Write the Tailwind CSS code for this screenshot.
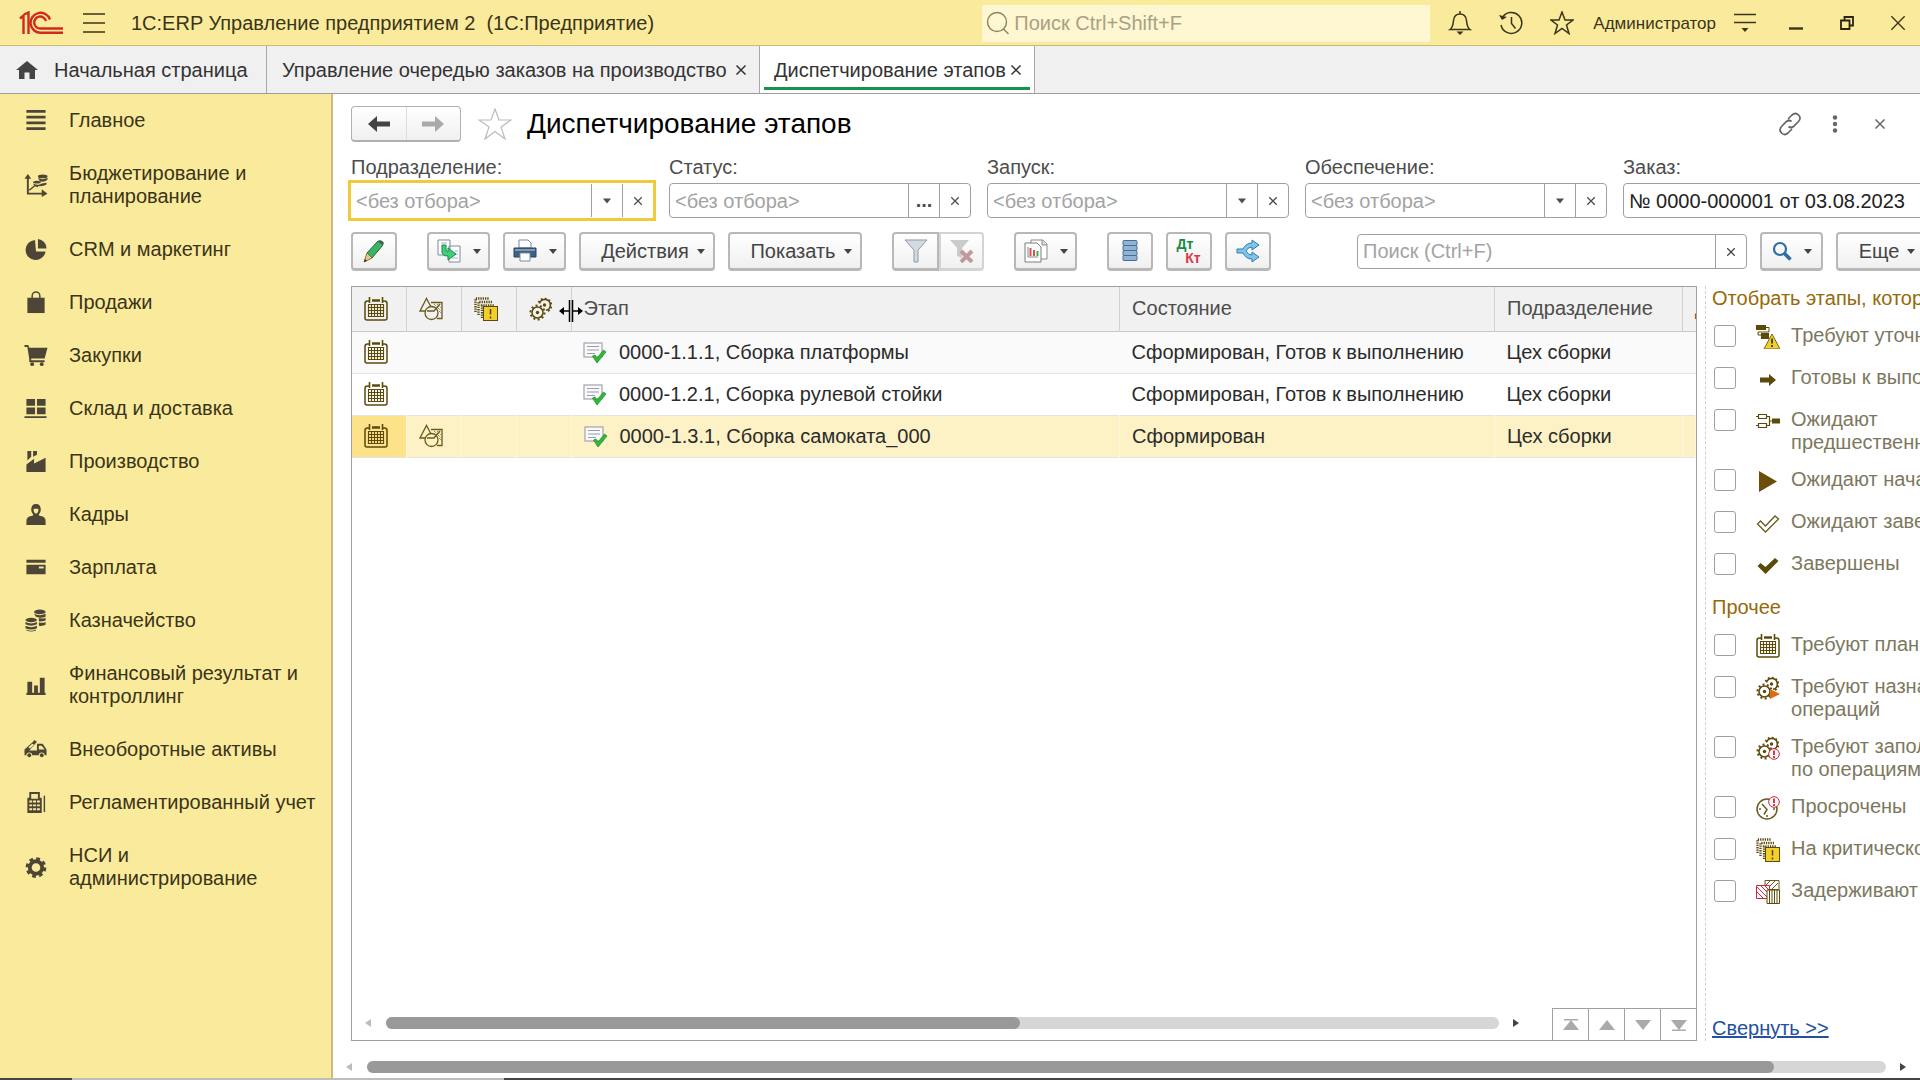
<!DOCTYPE html>
<html lang="ru">
<head>
    <meta charset="UTF-8">
    <meta name="viewport" content="width=device-width, initial-scale=1.0">
    <title>Диспетчирование этапов</title>
    <script src="https://cdn.jsdelivr.net/npm/@tailwindcss/browser@4"></script>
</head>
<body class="h-screen flex flex-col overflow-hidden bg-white font-['Liberation_Sans',Arial,sans-serif] text-[20px] leading-[23px] text-[#333]">

    <!-- Shared icons -->
    <svg class="hidden">
        <symbol id="calendar" viewBox="0 0 24 24">
            <path d="M5 4H3.500Q1 4 1 6.500V21q0 2 2 2h18q2 0 2-2V6.500Q23 4 20.500 4H19" fill="none" stroke="#5c4a0a" stroke-width="1.500"/>
            <path d="M8 3.500h8" stroke="#5c4a0a" stroke-width="2.500"/>
            <path d="M5.500 0v6M18.500 0v6" stroke="#5c4a0a" stroke-width="1.600"/>
            <path d="M4 7.500h16M4 10.500h16M4 13.500h16M4 16.500h16M4 19.500h16M4.500 7v13M7.500 7v13M10.500 7v13M13.500 7v13M16.500 7v13M19.500 7v13" stroke="#5c4a0a" stroke-width="1.100"/>
        </symbol>
        <symbol id="shapes" viewBox="0 0 24 24">
            <g fill="none" stroke="#6b5a1e" stroke-width="1.300">
                <path d="M12 10L7.500 1.500 1 14h6"/>
                <circle cx="12.500" cy="16" r="6.500"/>
                <path d="M12 5.500h11v16h-5M8 14h7L21 7"/>
                <path d="M15 7l7 7M18 7l4 4M20 14l3 3" stroke-width="1" stroke-dasharray="1 1"/>
            </g>
        </symbol>
        <symbol id="critical" viewBox="0 0 24 24">
            <path d="M1.500 15V1.500H15M4.500 18V5H18M8 21V8.500h12" fill="none" stroke="#5c4a0a" stroke-width="2.400" stroke-dasharray="1.300 1"/>
            <rect x="9.500" y="9.500" width="14" height="14" fill="#f3cf2c" stroke="#5c4a0a"/>
            <path d="M16.500 12v5.500M16.500 19.500v2" stroke="#5c4a0a" stroke-width="1.600"/>
        </symbol>
        <symbol id="gears" viewBox="0 0 24 24">
            <g fill="none" stroke="#5c4a0a">
                <path d="M10.500 6.500A5.500 5.500 0 1 1 17 13.300" stroke-width="1.500"/>
                <path d="M9.500 5.500A6.700 6.700 0 1 1 17.500 14.800" stroke-width="2" stroke-dasharray="1.800 2"/>
                <circle cx="8.500" cy="15.500" r="5.500" stroke-width="1.500"/>
                <circle cx="8.500" cy="15.500" r="7" stroke-width="2" stroke-dasharray="2 2.400"/>
            </g>
            <circle cx="8.500" cy="15.500" r="1.700" fill="#5c4a0a"/>
            <circle cx="15.500" cy="8" r="1.700" fill="#5c4a0a"/>
        </symbol>
        <symbol id="stage" viewBox="0 0 24 24">
            <rect x="1" y="3" width="18" height="14" fill="#fafafa" stroke="#a2a2aa" stroke-width="1.200"/>
            <path d="M4 6.500h12M4 10h12M4 13.500h8" stroke="#9a9ab0" stroke-width="1.200"/>
            <path d="M9.500 16l4.500 7 9-11-2.500-2-6.500 8-2-3z" fill="#2fb83c" stroke="#158a22" stroke-width=".7"/>
        </symbol>
        <symbol id="cross" viewBox="0 0 12 12">
            <path d="M1.500 1.500l9 9M10.500 1.500l-9 9" fill="none" stroke="currentColor" stroke-width="1.500"/>
        </symbol>
        <symbol id="down" viewBox="0 0 10 6">
            <path d="M0 0h10L5 6z" fill="currentColor"/>
        </symbol>
    </svg>

    <!-- Title bar -->
    <header class="h-[46px] shrink-0 flex items-center bg-[#faeb9c] border-b border-[#c9bb73] pl-[19px] pr-[14px] pt-px text-[#3a3419]">
        <svg class="w-11 h-6 shrink-0" viewBox="0 0 44 24" fill="none" stroke="#cf2a1c" stroke-width="2.400">
            <path d="M1 7.500L4.500 4.500V23M5 3.500l4.500-2V23"/>
            <path d="M31 8.500A10 10 0 1 0 22 21.800h22"/>
            <path d="M27 10a6 6 0 1 0-5 7.500h22"/>
        </svg>
        <button class="ml-5 shrink-0" aria-label="Меню">
            <svg class="w-[22px] h-5" viewBox="0 0 22 20" stroke="#3a3419" stroke-width="1.600"><path d="M0 1h22M0 10h22M0 19h22"/></svg>
        </button>
        <h1 class="ml-[26px] whitespace-pre">1С:ERP Управление предприятием 2  (1С:Предприятие)</h1>
        <label class="ml-auto w-[448px] h-[37px] flex items-center bg-[#fff6d2] pl-1 gap-1">
            <svg class="w-6 h-6 shrink-0" viewBox="0 0 24 24" fill="none" stroke="#8a8460" stroke-width="1.400"><circle cx="11" cy="11" r="9.500"/><path d="M17.500 18l5 5"/></svg>
            <input type="search" placeholder="Поиск Ctrl+Shift+F" class="grow min-w-0 outline-none placeholder:text-[#a9a184]">
        </label>
        <button class="ml-[18px]" aria-label="Уведомления">
            <svg class="w-6 h-6" viewBox="0 0 24 24" fill="none" stroke="#3a3419" stroke-width="1.500"><path d="M2 18.500c3-2 3-5 3.500-9C6 5 8.500 3 12 3s6 2 6.500 6.500c.5 4 .5 7 3.500 9zM12 0v3"/><path d="M8.500 20.500h7L12 24z" fill="#3a3419" stroke="none"/></svg>
        </button>
        <button class="ml-[27px]" aria-label="История">
            <svg class="w-6 h-6" viewBox="0 0 24 24" fill="none" stroke="#3a3419" stroke-width="1.500"><path d="M3 7a10.500 10.500 0 1 1-1 7M12.500 6v6.500l4 5"/><path d="M0 4l3 5 5-3z" fill="#3a3419" stroke="none"/></svg>
        </button>
        <button class="ml-[27px]" aria-label="Избранное">
            <svg class="w-6 h-6" viewBox="0 0 24 24" fill="none" stroke="#3a3419" stroke-width="1.500"><path d="M12 1l3 8h8l-6.500 5 2.500 8.500-7-5-7 5L7.500 14 1 9h8z"/></svg>
        </button>
        <a href="#" class="ml-[19px] text-[17px]">Администратор</a>
        <button class="ml-[18px]" aria-label="Сервис">
            <svg class="w-[22px] h-5" viewBox="0 0 22 20" stroke="#3a3419" stroke-width="1.600"><path d="M0 1.500h22M0 9.500h22"/><path d="M7.500 15h7l-3.500 4z" fill="#3a3419" stroke="none"/></svg>
        </button>
        <button class="ml-[33px]" aria-label="Свернуть">
            <svg class="w-[14px] h-[14px]" viewBox="0 0 14 14" stroke="#3a3419" stroke-width="2.400"><path d="M0 12.500h14"/></svg>
        </button>
        <button class="ml-[37px]" aria-label="Развернуть">
            <svg class="w-[14px] h-[14px]" viewBox="0 0 14 14" fill="none" stroke="#2a2510" stroke-width="1.800"><path d="M1 4.500h8.500V13H1z"/><path d="M4.500 4.500V1H13v8.500H9.500"/></svg>
        </button>
        <button class="ml-9" aria-label="Закрыть">
            <svg class="w-4 h-4" viewBox="0 0 12 12" stroke="#3a3419"><path d="M1 1l10 10M11 1L1 11"/></svg>
        </button>
    </header>

    <!-- Open windows -->
    <nav class="h-12 shrink-0 flex bg-[#f0f0f0] border-b border-[#9c9c9c] [&>a]:pt-px">
        <a href="#" class="flex items-center gap-4 pl-4 w-[267px] border-r border-[#a8a8a8]">
            <svg class="w-[22px] h-[18px]" viewBox="0 0 22 18" fill="#444"><path d="M11 0L0 9h3v9h5.500v-6.500h5V18H19V9h3z"/></svg>
            Начальная страница
        </a>
        <a href="#" class="flex items-center justify-between pl-[15px] pr-3 w-[492px]">
            Управление очередью заказов на производство
            <svg class="w-3 h-3"><use href="#cross"/></svg>
        </a>
        <a href="#" class="relative flex items-center justify-between pl-[14px] pr-3 w-[276px] bg-white border-x border-[#a8a8a8]">
            Диспетчирование этапов
            <svg class="w-3 h-3"><use href="#cross"/></svg>
            <span class="absolute inset-x-1 bottom-[3px] h-[3px] bg-[#169150]"></span>
        </a>
    </nav>

    <div class="grow min-h-0 flex">

        <!-- Sections -->
        <aside class="w-[333px] shrink-0 bg-[#faeb9c] border-r-2 border-[#cdbb7f] text-[#3a3419]">
            <ul class="[&_a]:flex [&_a]:items-center [&_a]:gap-[21px] [&_a]:pl-6 [&_a]:py-[15px] [&_svg]:w-6 [&_svg]:h-[23px] [&_svg]:shrink-0 [&_svg]:text-[#4d4637] [&_svg]:fill-current">
                <li><a href="#"><svg viewBox="0 0 24 24"><path d="M2 1h20v3H2zM2 7h20v3H2zM2 13h20v3H2zM2 19h20v3H2z"/></svg>Главное</a></li>
                <li><a href="#"><svg viewBox="0 0 24 24"><path d="M0 5l3.500-5L7 5H4.500v14.500H18V16l6 4.500-6 3.500v-2.500H2.500V5z"/><path d="M5 17l6-5 3 1" fill="none" stroke="currentColor" stroke-width="1.500"/><ellipse cx="19" cy="2.500" rx="5" ry="2"/><path d="M14 4q5 3 10 0v2q-4 3-8 1.500zM9 8q4-2 8 0v1q-4 2-8 0zM9 10q5 2.500 9 0l5-1v2q-5 3-13 1z"/></svg>Бюджетирование и<br>планирование</a></li>
                <li><a href="#"><svg viewBox="0 0 24 24"><path d="M11 2a10.500 10.500 0 1 0 11 12H12z"/><path d="M14 1v10h9A10 10 0 0 0 14 1z"/></svg>CRM и маркетинг</a></li>
                <li><a href="#"><svg viewBox="0 0 24 24"><path d="M3 7h18v16H3z"/><path d="M8 11V5a4 4 0 0 1 8 0v6" fill="none" stroke="currentColor" stroke-width="1.500"/></svg>Продажи</a></li>
                <li><a href="#"><svg viewBox="0 0 24 24"><path d="M0 1h4l1 3h19l-3 11H7v2h14v2H5v-3L3 3H0z"/><circle cx="8" cy="21" r="2"/><circle cx="18" cy="21" r="2"/></svg>Закупки</a></li>
                <li><a href="#"><svg viewBox="0 0 24 24"><path d="M2 2h9v7H2zM13 2h9v7h-9zM2 11h9v7H2zM13 11h9v7h-9zM0 20h23v2H0z"/></svg>Склад и доставка</a></li>
                <li><a href="#"><svg viewBox="0 0 24 24"><path d="M2 23v-8l8-6v5l12-6v15zM3 1h4v6l-4 4zM9 1h4v4L9 7z"/></svg>Производство</a></li>
                <li><a href="#"><svg viewBox="0 0 24 24"><path d="M12 1q5 0 5 6 0 3-2 5v1l4 1q3 1 3 5v4H2v-4q0-4 3-5l4-1v-1Q7 10 7 7q0-6 5-6z"/><path d="M9.500 6h5q0 5-2.500 5T9.500 6z" fill="#faeb9c"/></svg>Кадры</a></li>
                <li><a href="#"><svg viewBox="0 0 24 24"><path d="M2 4h20v3H2zM2 9h20v10H2z"/><path d="M15 11h5v2h-5z" fill="#faeb9c"/></svg>Зарплата</a></li>
                <li><a href="#"><svg viewBox="0 0 24 24"><ellipse cx="16" cy="3" rx="6" ry="2.500"/><path d="M10 5q6 3 12 0v3q-5 2-10 0zM15 9.500q4 1 7-.5v3q-3 1-7 1zM15 14q4 1 7-.5v3q-3 1.500-7 1z"/><ellipse cx="7" cy="11.500" rx="6" ry="2.300"/><path d="M1 13.500q6 3 12 0v2.500q-6 3-12 0zM1 17.500q6 3 12 0V20q-6 3-12 0zM2 21.500q5 2.500 10 0v1q-5 2-10 0z"/></svg>Казначейство</a></li>
                <li><a href="#"><svg viewBox="0 0 24 24"><path d="M2 19.500h20V22H2zM3 8h5v12H3zM10 12h4v8h-4zM16 4h5v16h-5z"/></svg>Финансовый результат и<br>контроллинг</a></li>
                <li><a href="#"><svg viewBox="0 0 24 24"><path d="M0 12l9-8 1-2 3 2-8 9h8V6h6l4 6v6h-2a3 3 0 0 0-6 0H8a3 3 0 0 0-6 0H0z"/><path d="M15 8h3l3 4h-6zM4 10l4-4 2 1-4 4z" fill="#faeb9c"/><circle cx="5" cy="18" r="2"/><circle cx="18" cy="18" r="2"/></svg>Внеоборотные активы</a></li>
                <li><a href="#"><svg viewBox="0 0 24 24"><path d="M5 1h11v6h2v16H3V7h2zM20 5h1.500v17H20z"/><path d="M7 3h7v5H7zM5 10h3v2H5zM9 10h3v2H9zM13 10h3v2h-3zM5 14h3v2H5zM9 14h3v2H9zM13 14h3v2h-3zM5 18h3v2H5zM9 18h3v2H9zM13 18h3v2h-3z" fill="#faeb9c"/></svg>Регламентированный учет</a></li>
                <li><a href="#"><svg viewBox="0 0 24 24"><circle cx="12" cy="12" r="6.500" fill="none" stroke="currentColor" stroke-width="4"/><circle cx="12" cy="12" r="9.300" fill="none" stroke="currentColor" stroke-width="3" stroke-dasharray="3.900 3.400"/></svg>НСИ и<br>администрирование</a></li>
            </ul>
        </aside>

        
        <main class="grow min-w-0 overflow-hidden flex flex-col">
            <div class="flex items-center pl-[18px] pt-3 pr-[34px] h-12 shrink-0 text-[#666]">
                <div class="flex w-[110px] h-9 rounded border border-[#b0b0b0] border-b-2 bg-linear-to-b from-white to-[#f0f0f0]">
                    <button class="flex-1 flex items-center justify-center border-r border-[#ddd]" aria-label="Назад"><svg class="w-[22px] h-4" viewBox="0 0 22 16" fill="#444"><path d="M0 8l9-8v5.500h13v5H9V16z"/></svg></button>
                    <button class="flex-1 flex items-center justify-center" aria-label="Вперед"><svg class="w-[22px] h-4" viewBox="0 0 22 16" fill="#aaa"><path d="M22 8l-9-8v5.500H0v5h13V16z"/></svg></button>
                </div>
                <button class="ml-[17px]" aria-label="В избранное"><svg class="w-[34px] h-8" viewBox="0 0 34 32" fill="none" stroke="#bbb" stroke-width="1.200"><path d="M17 1l4 11h12l-10 7 4 12-10-7.500L7 31l4-12L1 12h12z"/></svg></button>
                <h2 class="ml-[15px] text-[28px] leading-8 text-black whitespace-nowrap">Диспетчирование этапов</h2>
                <button class="ml-auto" aria-label="Ссылка"><svg class="w-6 h-6" viewBox="0 0 24 24" fill="none" stroke="currentColor" stroke-width="1.700"><path d="M10 7l4-4q3.500-3 6.500 0t0 6.500l-5 5q-2.500 2-5 0M14 17l-4 4q-3.500 3-6.500 0t0-6.500l5-5q2.500-2 5 0"/></svg></button>
                <button class="ml-[30px]" aria-label="Действия формы"><svg class="w-[6px] h-[18px]" viewBox="0 0 6 18" fill="currentColor"><circle cx="3" cy="2.500" r="2.200"/><circle cx="3" cy="9" r="2.200"/><circle cx="3" cy="15.500" r="2.200"/></svg></button>
                <button class="ml-9" aria-label="Закрыть форму"><svg class="w-3 h-3"><use href="#cross"/></svg></button>
            </div>

            <div class="grow min-h-0 w-[calc(100%+124px)] pl-[18px] pt-[13px] flex flex-col">

                <!-- Filters -->
                <div class="flex gap-4 shrink-0 text-[#4d4d4d] [&>div]:w-[302px] [&>div]:shrink-0 [&_label]:block [&_label]:leading-6 [&_label]:mb-1 [&_input]:grow [&_input]:min-w-0 [&_input]:px-[5px] [&_input]:pt-px [&_input]:outline-none [&_input]:placeholder:text-[#a3a3a3] [&_button]:w-[31px] [&_button]:shrink-0 [&_button]:border-l [&_button]:border-[#a0a0a0] [&_button]:flex [&_button]:items-center [&_button]:justify-center">
                    <div>
                        <label for="department">Подразделение:</label>
                        <div class="flex h-[35px] py-px outline-3 outline-[#efcb3c]">
                            <input id="department" placeholder="&lt;без отбора&gt;">
                            <button aria-label="Выбрать"><svg class="w-2 h-[6px]"><use href="#down"/></svg></button>
                            <button aria-label="Очистить"><svg class="w-[10px] h-[10px]"><use href="#cross"/></svg></button>
                        </div>
                    </div>
                    <div>
                        <label for="status">Статус:</label>
                        <div class="flex h-[35px] rounded border border-[#a0a0a0]">
                            <input id="status" placeholder="&lt;без отбора&gt;">
                            <button class="font-bold">...</button>
                            <button aria-label="Очистить"><svg class="w-[10px] h-[10px]"><use href="#cross"/></svg></button>
                        </div>
                    </div>
                    <div>
                        <label for="launch">Запуск:</label>
                        <div class="flex h-[35px] rounded border border-[#a0a0a0]">
                            <input id="launch" placeholder="&lt;без отбора&gt;">
                            <button aria-label="Выбрать"><svg class="w-2 h-[6px]"><use href="#down"/></svg></button>
                            <button aria-label="Очистить"><svg class="w-[10px] h-[10px]"><use href="#cross"/></svg></button>
                        </div>
                    </div>
                    <div>
                        <label for="supply">Обеспечение:</label>
                        <div class="flex h-[35px] rounded border border-[#a0a0a0]">
                            <input id="supply" placeholder="&lt;без отбора&gt;">
                            <button aria-label="Выбрать"><svg class="w-2 h-[6px]"><use href="#down"/></svg></button>
                            <button aria-label="Очистить"><svg class="w-[10px] h-[10px]"><use href="#cross"/></svg></button>
                        </div>
                    </div>
                    <div>
                        <label for="order">Заказ:</label>
                        <div class="flex h-[35px] rounded border border-[#a0a0a0]">
                            <input id="order" value="№ 0000-000001 от 03.08.2023" class="text-[#222]">
                        </div>
                    </div>
                </div>

                <!-- Command bar -->
                <div class="mt-[14px] flex shrink-0 items-center text-[#444] [&_button]:h-[39px] [&_button]:shrink-0 [&_button]:flex [&_button]:items-center [&_button]:justify-center [&>button]:rounded [&>button]:border-2 [&>button]:border-[#b8b8b8] [&>button]:border-b-3 [&>button]:bg-linear-to-b [&>button]:from-white [&>button]:to-[#f0f0f0]">
                    <button class="w-[46px]" aria-label="Изменить"><svg class="w-6 h-6" viewBox="0 0 24 24"><path d="M5 14L16 2l5 4-11 13z" fill="#3cb465" stroke="#23663b"/><path d="M16 2l2-1q3 1 4 3l-1 2z" fill="#3f5f4a"/><path d="M5 14l-3 9 8-4z" fill="#e8c98a" stroke="#8a6f35"/><path d="M2 23l1-3 2 2z" fill="#333"/></svg></button>
                    <button class="ml-[30px] w-[63px] gap-3" aria-label="Создать на основании"><svg class="w-6 h-6" viewBox="0 0 24 24"><path d="M1 1h12v15H1zM12 7h11v16H12z" fill="#fff" stroke="#7d8d97"/><path d="M4 4h6M4 7h4M15 19h6M18 12h3M18 15h3" stroke="#9fb3bf"/><path d="M5 6v7q0 4 6 4v4l8-6-8-6v4q-2 0-2-3V6z" fill="#3fd07c" stroke="#1d8a48"/></svg><svg class="w-2 h-[5px]"><use href="#down"/></svg></button>
                    <button class="ml-[13px] w-[63px] gap-3" aria-label="Печать"><svg class="w-6 h-6" viewBox="0 0 24 24"><path d="M6 9V1h9l3 3v5z" fill="#fff" stroke="#7d8d97"/><path d="M1 9h22v9H1z" fill="#3d6183" stroke="#294763"/><path d="M2 10h20v2H2z" fill="#7e9db8"/><path d="M7 14h10v8H7z" fill="#fff" stroke="#7d8d97"/></svg><svg class="w-2 h-[5px]"><use href="#down"/></svg></button>
                    <button class="ml-[13px] w-[136px] gap-2 pl-3">Действия<svg class="w-2 h-[5px]"><use href="#down"/></svg></button>
                    <button class="ml-[13px] w-[134px] gap-2 pl-3">Показать<svg class="w-2 h-[5px]"><use href="#down"/></svg></button>
                    <div class="ml-[30px] flex shrink-0 [&_button]:border-2 [&_button]:border-b-3 [&_button]:bg-linear-to-b [&_button]:from-white [&_button]:to-[#f0f0f0]">
                        <button class="w-[47px] rounded-l border-[#b8b8b8]" aria-label="Отбор"><svg class="w-6 h-6" viewBox="0 0 24 24"><path d="M1 1h22l-9 10v12h-4V11z" fill="#d4dae0" stroke="#8d9aa5"/></svg></button>
                        <button class="w-[45px] rounded-r border-[#d4d4d4] border-l-0" aria-label="Снять отбор"><svg class="w-6 h-6" viewBox="0 0 24 24"><path d="M0 1h19l-7 8v10l-5-2V9z" fill="#cbcbcb"/><path d="M11 12l11 11M22 12L11 23" stroke="#c09a9a" stroke-width="4"/></svg></button>
                    </div>
                    <button class="ml-[30px] w-[63px] gap-3" aria-label="Отчеты"><svg class="w-6 h-6" viewBox="0 0 24 24"><path d="M7 1h12l4 4v15H7z" fill="#fff" stroke="#8c8c8c"/><path d="M18 1v5h5" fill="#d9d9d9" stroke="#8c8c8c"/><path d="M1 4h12l4 4v15H1z" fill="#fff" stroke="#7c7c7c"/><path d="M4 8v10h10" fill="none" stroke="#888"/><path d="M6.500 9v8M10 11v6" stroke="#d95050" stroke-width="2"/><path d="M13.500 12v5" stroke="#3ab15b" stroke-width="2"/></svg><svg class="w-2 h-[5px]"><use href="#down"/></svg></button>
                    <button class="ml-[30px] w-[46px]" aria-label="Список"><svg class="w-6 h-6" viewBox="0 0 24 24"><g fill="#8fb4d6" stroke="#4b6d90"><rect x="5" y="1.500" width="14" height="5" rx="1"/><rect x="5" y="6.500" width="14" height="5" rx="1"/><rect x="5" y="11.500" width="14" height="5" rx="1"/><rect x="5" y="16.500" width="14" height="5" rx="1"/></g></svg></button>
                    <button class="ml-[13px] w-[46px] text-[14px] leading-[14px] font-bold"><span><span class="block pr-2 text-[#168a45]">Дт</span><span class="block pl-2 text-[#d93a44]">Кт</span></span></button>
                    <button class="ml-[13px] w-[46px]" aria-label="Структура"><svg class="w-6 h-6" viewBox="0 0 24 24"><path d="M1 10h6q3-6 9-6V1l7 5-7 5V8q-4 0-6 4 2 4 6 4v-3l7 5-7 5v-3q-6 0-9-6H1z" fill="#7fc4ea" stroke="#2e7fae"/></svg></button>
                    <div class="ml-[86px] grow flex h-[35px] rounded border border-[#a0a0a0]">
                        <input type="text" aria-label="Поиск" placeholder="Поиск (Ctrl+F)" class="grow min-w-0 px-[5px] outline-none placeholder:text-[#a3a3a3]">
                        <button class="w-[31px] h-full! border-l border-[#a0a0a0]" aria-label="Очистить"><svg class="w-[10px] h-[10px]"><use href="#cross"/></svg></button>
                    </div>
                    <button class="ml-[13px] w-[63px] gap-3" aria-label="Найти"><svg class="w-5 h-5" viewBox="0 0 20 20" fill="none" stroke="#2e6da4"><circle cx="8" cy="8" r="6" stroke-width="2.200"/><path d="M12.500 12.500l6 6" stroke-width="3.500"/></svg><svg class="w-2 h-[5px]"><use href="#down"/></svg></button>
                    <button class="ml-[13px] mr-[114px] w-[94px] gap-2 pl-2">Еще<svg class="w-2 h-[5px]"><use href="#down"/></svg></button>
                </div>

                <div class="mt-[15px] grow min-h-0 flex">

                    <!-- Stages -->
                    <section class="relative grow min-w-0 flex flex-col border border-[#a0a0a0]">
                        <table class="w-full table-fixed text-left text-[#2b2b2b] [&_th]:font-normal [&_th]:text-[#4d4d4d] [&_th]:h-11 [&_th]:border-r [&_th]:border-[#d0d0d0] [&_td]:h-[42px] [&_th]:px-3 [&_td]:px-3 [&_th]:overflow-hidden [&_tr]:border-b [&_tr]:border-[#e4e4e4] whitespace-nowrap">
                            <colgroup>
                                <col class="w-[54px]"><col class="w-[55px]"><col class="w-[55px]"><col class="w-[55px]">
                                <col><col class="w-[375px]"><col class="w-[188px]"><col class="w-[13px]">
                            </colgroup>
                            <thead>
                                <tr class="bg-[#f1f1f1] border-[#c8c8c8]!">
                                    <th aria-label="Планирование"><svg class="w-6 h-6"><use href="#calendar"/></svg></th>
                                    <th aria-label="Обеспечение"><svg class="w-6 h-6"><use href="#shapes"/></svg></th>
                                    <th aria-label="Критический путь"><svg class="w-6 h-6"><use href="#critical"/></svg></th>
                                    <th aria-label="Операции"><svg class="w-6 h-6"><use href="#gears"/></svg></th>
                                    <th>Этап</th>
                                    <th>Состояние</th>
                                    <th>Подразделение</th>
                                    <th class="border-r-0!">Д</th>
                                </tr>
                            </thead>
                            <tbody>
                                <tr class="bg-[#fafafa]">
                                    <td><svg class="w-6 h-6"><use href="#calendar"/></svg></td><td></td><td></td><td></td>
                                    <td><div class="flex items-center gap-3"><svg class="w-6 h-6"><use href="#stage"/></svg>0000-1.1.1, Сборка платформы</div></td>
                                    <td>Сформирован, Готов к выполнению</td><td>Цех сборки</td><td></td>
                                </tr>
                                <tr>
                                    <td><svg class="w-6 h-6"><use href="#calendar"/></svg></td><td></td><td></td><td></td>
                                    <td><div class="flex items-center gap-3"><svg class="w-6 h-6"><use href="#stage"/></svg>0000-1.2.1, Сборка рулевой стойки</div></td>
                                    <td>Сформирован, Готов к выполнению</td><td>Цех сборки</td><td></td>
                                </tr>
                                <tr class="bg-[#fdf1c6] [&_td]:border-r [&_td]:border-[#fff6dc]">
                                    <td class="bg-[#fce38a]"><svg class="w-6 h-6"><use href="#calendar"/></svg></td>
                                    <td><svg class="w-6 h-6"><use href="#shapes"/></svg></td><td></td><td></td>
                                    <td><div class="flex items-center gap-3"><svg class="w-6 h-6"><use href="#stage"/></svg>0000-1.3.1, Сборка самоката_000</div></td>
                                    <td>Сформирован</td><td>Цех сборки</td><td></td>
                                </tr>
                            </tbody>
                        </table>

                        <!-- Column resize pointer -->
                        <svg class="absolute left-[207px] top-[12px] w-6 h-6" viewBox="0 0 24 24" stroke="#000" fill="#000"><path d="M10.500 1v22M13.500 1v22" stroke-width="1.500"/><path d="M3 12h7M14 12h7" stroke-width="1.500"/><path d="M0 12l5-4v8zM24 12l-5-4v8z" stroke="none"/></svg>

                        <div class="mt-auto flex items-end h-8 text-[#aaa]">
                            <div class="grow flex items-center h-8 pl-[13px] pr-[33px] pb-[2px]">
                                <svg class="w-[6px] h-2 shrink-0" viewBox="0 0 6 8" fill="#bbb"><path d="M6 0v8L0 4z"/></svg>
                                <div class="ml-[15px] grow h-3 rounded-full bg-[#d6d6d6]"><div class="h-3 rounded-full bg-[#999]" style="width:57%"></div></div>
                                <svg class="ml-[14px] w-[6px] h-2 shrink-0" viewBox="0 0 6 8" fill="#444"><path d="M0 0v8l6-4z"/></svg>
                            </div>
                            <div class="flex h-8 border-t border-[#a0a0a0] [&_button]:w-9 [&_button]:border-l [&_button]:border-[#a0a0a0] [&_button]:flex [&_button]:items-center [&_button]:justify-center [&_svg]:w-4 [&_svg]:h-3 [&_svg]:fill-current">
                                <button aria-label="В начало"><svg viewBox="0 0 16 12"><path d="M1 0h14v1.500H1zM8 1l8 10H0z"/></svg></button>
                                <button aria-label="Вверх"><svg viewBox="0 0 16 12"><path d="M8 1l8 10H0z"/></svg></button>
                                <button aria-label="Вниз"><svg viewBox="0 0 16 12"><path d="M8 11L0 1h16z"/></svg></button>
                                <button aria-label="В конец"><svg viewBox="0 0 16 12"><path d="M8 11L0 1h16zM1 10.500h14V12H1z"/></svg></button>
                            </div>
                        </div>
                    </section>

                    <!-- Quick selection -->
                    <section class="ml-2 w-[339px] shrink-0 flex flex-col border-l border-dashed border-[#d0d0d0] pl-[6px] pt-px text-[#7c7860] whitespace-nowrap [&_h3]:mb-3 [&_h3]:text-[#96690a] [&_label]:flex [&_label]:items-start [&_label]:min-h-[30px] [&_label]:pt-[2px] [&_label]:mb-3 [&_input]:appearance-none [&_input]:size-[22px] [&_input]:mt-px [&_input]:ml-[2px] [&_input]:mr-5 [&_input]:shrink-0 [&_input]:border [&_input]:border-[#a0a0a0] [&_input]:rounded-[3px] [&_svg]:size-6 [&_svg]:mt-px [&_svg]:mr-[11px] [&_svg]:shrink-0">
                        <h3>Отобрать этапы, котор</h3>
                        <label><input type="checkbox"><svg viewBox="0 0 24 24"><path d="M0 0h10v5H0zM5 8h8v6H5z" fill="#5c4a0a"/><path d="M10 2.500h3V7H2v3h3" fill="none" stroke="#5c4a0a"/><path d="M16 9l8 15H8z" fill="#f3cf2c" stroke="#7a6410"/><path d="M16 13.500v5M16 20v2" stroke="#333" stroke-width="1.700"/></svg>Требуют уточн</label>
                        <label><input type="checkbox"><svg viewBox="0 0 24 24"><path d="M4 10.500h9V7l7 6-7 6v-3.500H4z" fill="#5c4a0a"/></svg>Готовы к выпо</label>
                        <label><input type="checkbox"><svg viewBox="0 0 24 24"><path d="M2.500 5.500h8v4h-8zM2.500 14.500h8v4h-8zM0 7.500h2M0 16.500h2M11 7.500h2.500v9H11M13.500 12H17" fill="none" stroke="#5c4a0a" stroke-width="1.200"/><path d="M16 9.500h8v5h-8z" fill="#5c4a0a"/></svg><span>Ожидают<br>предшественн</span></label>
                        <label><input type="checkbox"><svg viewBox="0 0 24 24"><path d="M3 2l18 10.500L3 23z" fill="#6b4f08"/></svg>Ожидают нача</label>
                        <label><input type="checkbox"><svg viewBox="0 0 24 24"><path d="M1.500 13l3-3 5 5L19 5l3.500 3-13 13z" fill="none" stroke="#6b5a1e" stroke-width="1.300"/></svg>Ожидают заве</label>
                        <label><input type="checkbox"><svg viewBox="0 0 24 24"><path d="M1.500 13l3-3 5 4L19 5l3.500 3-13 13z" fill="#5c4a0a"/></svg>Завершены</label>
                        <h3 class="mt-1">Прочее</h3>
                        <label><input type="checkbox"><svg><use href="#calendar"/></svg>Требуют план</label>
                        <label><input type="checkbox"><svg viewBox="0 0 24 24"><use href="#gears"/><path d="M14 13l10 5-10 5z" fill="#e06a10"/></svg><span>Требуют назна<br>операций</span></label>
                        <label><input type="checkbox"><svg viewBox="0 0 24 24"><use href="#gears"/><circle cx="18" cy="18" r="5.300" fill="#fff" stroke="#d0253a"/><path d="M18 14.500v4.500M18 20v2" stroke="#d0253a" stroke-width="1.800"/></svg><span>Требуют запол<br>по операциям</span></label>
                        <label><input type="checkbox"><svg viewBox="0 0 24 24"><circle cx="11" cy="13" r="10" fill="#fff" stroke="#6b5a1e" stroke-width="1.500" /><path d="M6 8l5 5.500-3 5M3 13h2M11 21v-2M19 13h-2" fill="none" stroke="#6b5a1e" stroke-width="1.500"/><circle cx="18" cy="6" r="5.300" fill="#fff" stroke="#d0253a"/><path d="M18 2.500V7M18 8v2" stroke="#d0253a" stroke-width="1.800"/></svg>Просрочены</label>
                        <label><input type="checkbox"><svg><use href="#critical"/></svg>На критическо</label>
                        <label><input type="checkbox"><svg viewBox="0 0 24 24" fill="#fff"><path d="M9 .500h14v9H9z" stroke="#6b5a1e"/><path d="M10 5l4-4M11 9l8-8M16 9l6-6" stroke="#6b5a1e"/><path d="M.500 5.500h13v13H.500z" stroke="#d0253a"/><path d="M1 12l6 6M1 7l11 11M5 6l8 8M9 6l4 4" stroke="#d0253a"/><path d="M11 10h12.500v13.500H11z" stroke="#5c4a0a"/><path d="M13.500 10v13M16 10v13M18.500 10v13M21 10v13" stroke="#5c4a0a"/></svg>Задерживают</label>
                        <a href="#" class="mt-auto mb-px self-start underline text-[#24509e]">Свернуть &gt;&gt;</a>
                    </section>
                </div>
            </div>

            <!-- Form scrollbar -->
            <div class="h-[37px] shrink-0 flex items-center pt-[14px] pl-[13px] pr-[14px]">
                <svg class="w-[6px] h-2 shrink-0" viewBox="0 0 6 8" fill="#bbb"><path d="M6 0v8L0 4z"/></svg>
                <div class="ml-[15px] grow h-3 rounded-full bg-[#d6d6d6]"><div class="h-3 rounded-full bg-[#999]" style="width:92.600%"></div></div>
                <svg class="ml-[14px] w-[6px] h-2 shrink-0" viewBox="0 0 6 8" fill="#444"><path d="M0 0v8l6-4z"/></svg>
            </div>
        </main>
    </div>

    <footer class="h-[2px] shrink-0 flex bg-[#444]"><div class="ml-[72px] w-[432px] bg-[#bdbdbd]"></div></footer>
</body>
</html>
